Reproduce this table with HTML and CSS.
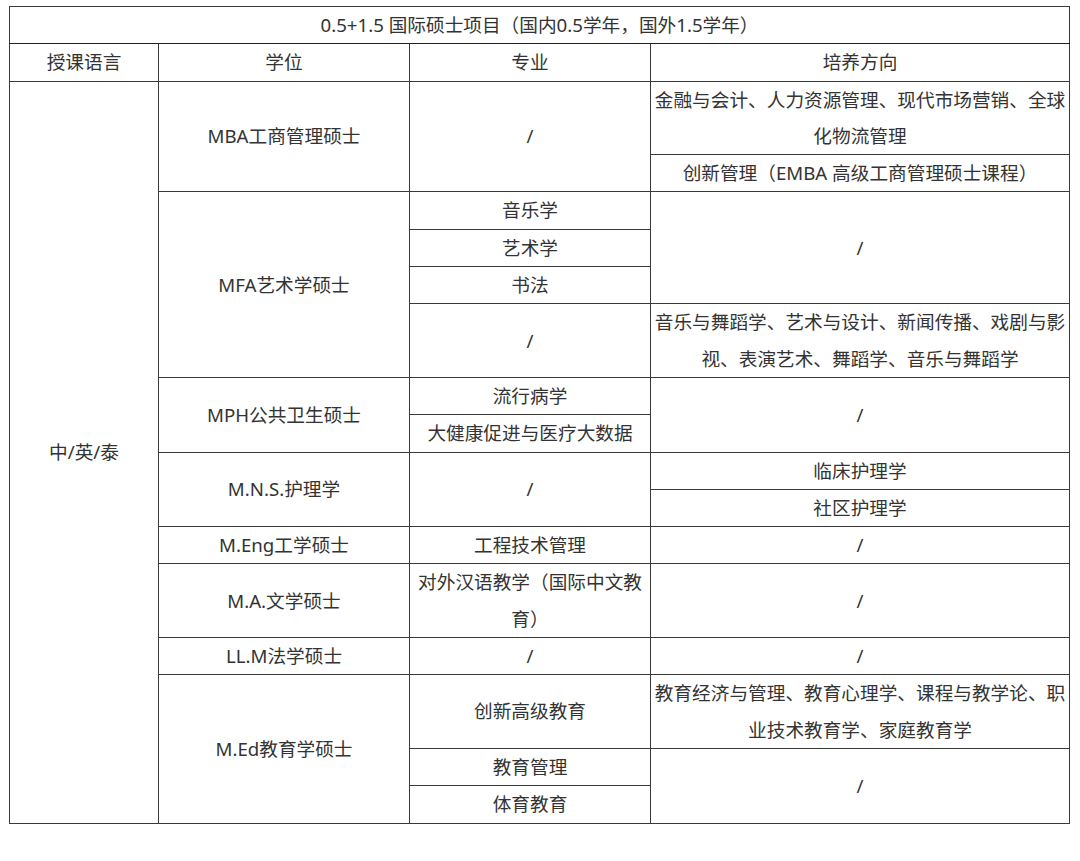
FILE: index.html
```html
<!DOCTYPE html>
<html lang="zh-CN">
<head>
<meta charset="utf-8">
<link rel="stylesheet" href="styles.css">
</head>
<body>
<div class="page">
<table class="prog">
  <colgroup>
    <col class="c1"><col class="c2"><col class="c3"><col class="c4">
  </colgroup>
  <tr><td colspan="4" class="title">0.5+1.5 国际硕士项目（国内0.5学年，国外1.5学年）</td></tr>
  <tr class="head"><td>授课语言</td><td>学位</td><td>专业</td><td>培养方向</td></tr>
  <tr>
    <td rowspan="16">中/英/泰</td>
    <td rowspan="2">MBA工商管理硕士</td>
    <td rowspan="2">/</td>
    <td>金融与会计、人力资源管理、现代市场营销、全球化物流管理</td>
  </tr>
  <tr><td>创新管理（EMBA 高级工商管理硕士课程）</td></tr>
  <tr>
    <td rowspan="4">MFA艺术学硕士</td>
    <td>音乐学</td>
    <td rowspan="3">/</td>
  </tr>
  <tr><td>艺术学</td></tr>
  <tr><td>书法</td></tr>
  <tr><td>/</td><td>音乐与舞蹈学、艺术与设计、新闻传播、戏剧与影视、表演艺术、舞蹈学、音乐与舞蹈学</td></tr>
  <tr>
    <td rowspan="2">MPH公共卫生硕士</td>
    <td>流行病学</td>
    <td rowspan="2">/</td>
  </tr>
  <tr><td>大健康促进与医疗大数据</td></tr>
  <tr>
    <td rowspan="2">M.N.S.护理学</td>
    <td rowspan="2">/</td>
    <td>临床护理学</td>
  </tr>
  <tr><td>社区护理学</td></tr>
  <tr><td>M.Eng工学硕士</td><td>工程技术管理</td><td>/</td></tr>
  <tr><td>M.A.文学硕士</td><td>对外汉语教学（国际中文教育）</td><td>/</td></tr>
  <tr><td>LL.M法学硕士</td><td>/</td><td>/</td></tr>
  <tr>
    <td rowspan="3">M.Ed教育学硕士</td>
    <td>创新高级教育</td>
    <td>教育经济与管理、教育心理学、课程与教学论、职业技术教育学、家庭教育学</td>
  </tr>
  <tr><td>教育管理</td><td rowspan="2">/</td></tr>
  <tr><td>体育教育</td></tr>
</table>
</div>
</body>
</html>
```

FILE: styles.css
```css
html, body {
  margin: 0;
  padding: 0;
  background: #ffffff;
}

.page {
  padding: 6px 0 0 9px;
}

.prog {
  border-collapse: collapse;
  table-layout: fixed;
  width: 1060px;
  border: 1px solid #8a8a8a;
  font-family: "Noto Sans", "Noto Sans CJK SC", sans-serif;
  font-size: 14pt;
  color: #333333;
}

.c1 { width: 149px; }
.c2 { width: 251px; }
.c3 { width: 241px; }
.c4 { width: 419px; }

.prog td {
  border: 1px solid #3a3a3a;
  padding: 0 3px;
  line-height: 36.3px;
  text-align: center;
  vertical-align: middle;
  word-break: normal;
}

.prog td.title {
  border-bottom-color: #222222;
}
```
